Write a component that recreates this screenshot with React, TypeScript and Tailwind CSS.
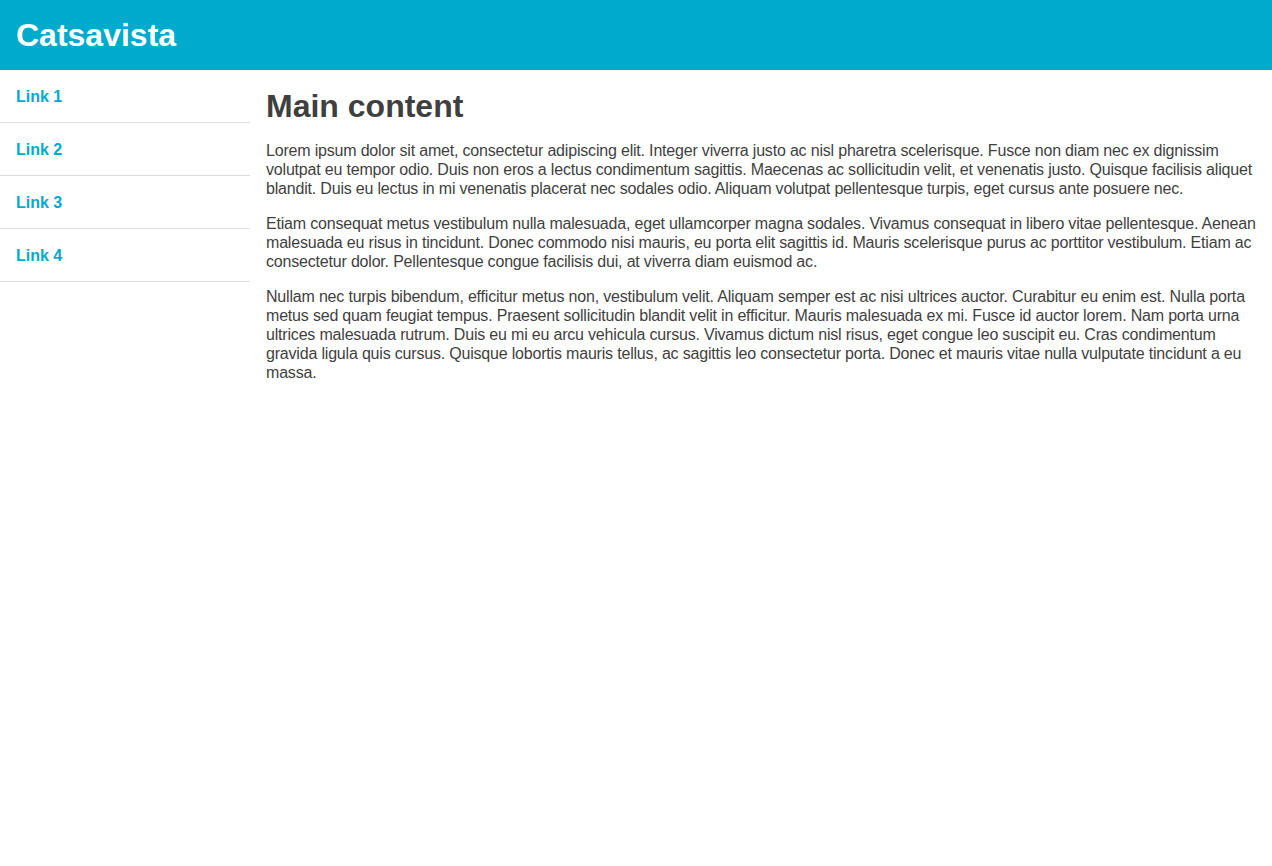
import React from 'react';

const links = ['Link 1', 'Link 2', 'Link 3', 'Link 4'];

const paragraphs = [
  'Lorem ipsum dolor sit amet, consectetur adipiscing elit. Integer viverra justo ac nisl pharetra scelerisque. Fusce non diam nec ex dignissim volutpat eu tempor odio. Duis non eros a lectus condimentum sagittis. Maecenas ac sollicitudin velit, et venenatis justo. Quisque facilisis aliquet blandit. Duis eu lectus in mi venenatis placerat nec sodales odio. Aliquam volutpat pellentesque turpis, eget cursus ante posuere nec.',
  'Etiam consequat metus vestibulum nulla malesuada, eget ullamcorper magna sodales. Vivamus consequat in libero vitae pellentesque. Aenean malesuada eu risus in tincidunt. Donec commodo nisi mauris, eu porta elit sagittis id. Mauris scelerisque purus ac porttitor vestibulum. Etiam ac consectetur dolor. Pellentesque congue facilisis dui, at viverra diam euismod ac.',
  'Nullam nec turpis bibendum, efficitur metus non, vestibulum velit. Aliquam semper est ac nisi ultrices auctor. Curabitur eu enim est. Nulla porta metus sed quam feugiat tempus. Praesent sollicitudin blandit velit in efficitur. Mauris malesuada ex mi. Fusce id auctor lorem. Nam porta urna ultrices malesuada rutrum. Duis eu mi eu arcu vehicula cursus. Vivamus dictum nisl risus, eget congue leo suscipit eu. Cras condimentum gravida ligula quis cursus. Quisque lobortis mauris tellus, ac sagittis leo consectetur porta. Donec et mauris vitae nulla vulputate tincidunt a eu massa.'
];

export default function App() {
  return (
    <div className="min-h-screen bg-white font-['Liberation_Sans',Arial,sans-serif] text-[#3f3f3f]">
      <header className="flex h-[70px] items-center bg-[#00aacc] px-4">
        <h1 className="text-[32px] font-bold leading-none text-white">Catsavista</h1>
      </header>
      <div className="flex">
        <nav className="w-[250px] shrink-0">
          {links.map(l => (
            <a
              key={l}
              href="#"
              className="block border-b border-[#dddddd] px-4 pt-[17px] pb-[15px] text-base font-bold leading-5 text-[#00aacc]">
              {l}
            </a>
          ))}
        </nav>
        <main className="flex-1 px-4 pt-[18px]">
          <h2 className="text-[32px] font-bold leading-[37px] text-[#3f3f3f]">Main content</h2>
          {paragraphs.map((p, i) => (
            <p key={i} className="mt-4 text-base leading-[19px] tracking-[-0.19px]">
              {p}
            </p>
          ))}
        </main>
      </div>
    </div>
  );
}
